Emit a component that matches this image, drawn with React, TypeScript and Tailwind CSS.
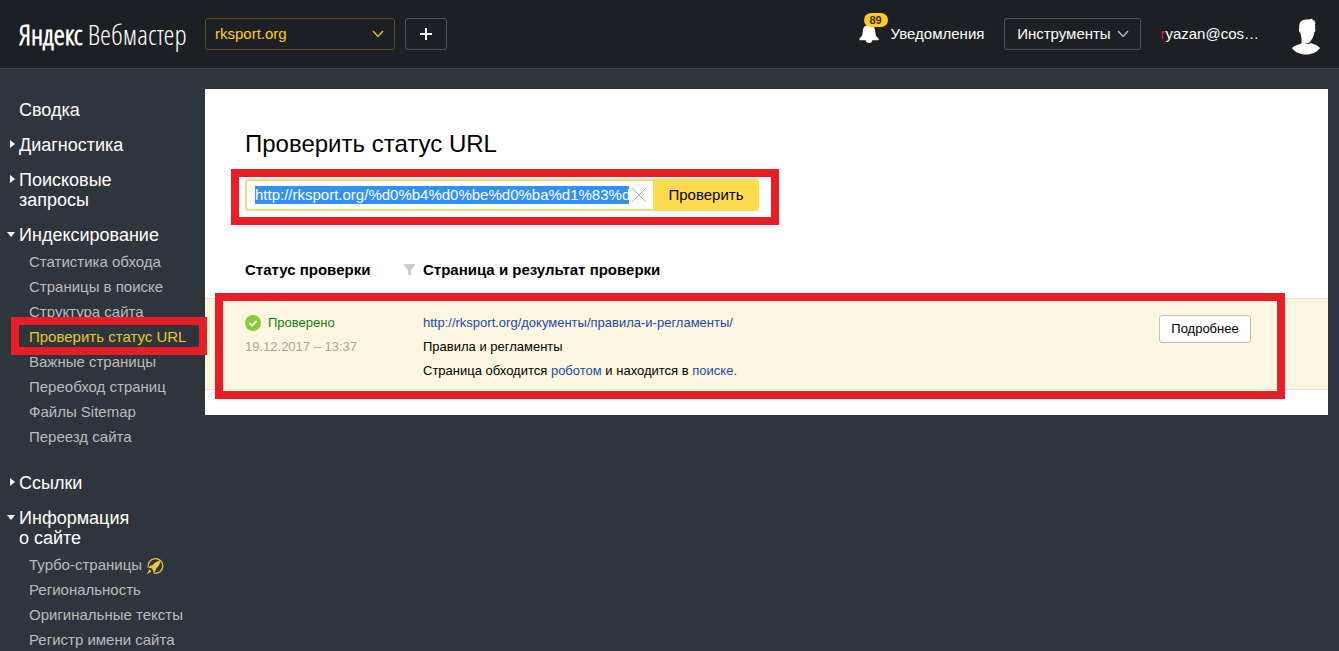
import { useEffect, useRef, useState } from "react";

type NavGroup = {
  title: string;
  state?: "closed" | "open";
  items?: { label: string; active?: boolean; turbo?: boolean }[];
};

const NAV: NavGroup[] = [
  { title: "Сводка" },
  { title: "Диагностика", state: "closed" },
  { title: "Поисковые запросы", state: "closed" },
  {
    title: "Индексирование",
    state: "open",
    items: [
      { label: "Статистика обхода" },
      { label: "Страницы в поиске" },
      { label: "Структура сайта" },
      { label: "Проверить статус URL", active: true },
      { label: "Важные страницы" },
      { label: "Переобход страниц" },
      { label: "Файлы Sitemap" },
      { label: "Переезд сайта" },
    ],
  },
  { title: "Ссылки", state: "closed" },
  {
    title: "Информация о\u00a0сайте",
    state: "open",
    items: [
      { label: "Турбо-страницы", turbo: true },
      { label: "Региональность" },
      { label: "Оригинальные тексты" },
      { label: "Регистр имени сайта" },
    ],
  },
];

const START_URL =
  "http://rksport.org/%d0%b4%d0%be%d0%ba%d1%83%d0%bc%d0%b5%d0%bd%d1%82%d1%8b/";

function Chevron({ className }: { className: string }) {
  return (
    <svg viewBox="0 0 12 8" className={className} fill="none" stroke="currentColor" strokeWidth="1.4" aria-hidden="true">
      <path d="M1 1l5 5.4L11 1" />
    </svg>
  );
}

function BellIcon() {
  return (
    <svg viewBox="0 0 20 20" className="h-5 w-5" fill="#fff" aria-hidden="true">
      <path d="M10 1c3.800 0 6 2.400 6.200 6 .2 3.600.8 5.600 3.400 7.600v1.600H.4v-1.600c2.600-2 3.200-4 3.400-7.600C4 3.400 6.200 1 10 1z" />
      <path d="M6.800 16h6.400a3.200 3 0 0 1-6.400 0z" />
    </svg>
  );
}

function Avatar() {
  return (
    <svg viewBox="0 0 28 38" className="h-[38px] w-7" aria-hidden="true">
      <path
        fill="#fff"
        d="M7.200 9C7.400 5.800 8.600 3.800 11.400 3c2.800-.7 6.200-.1 8.800-1.400l.6 1.900 2.700-.1-1.300 1.600 1.600.9-1 1c.6 1.500.4 3 .2 4.600.8.6.5 3.300-.8 4-.4 3.300-1.200 5.600-2.700 7.200-.9 1.900-2.400 3.500-4.300 3.500-2.500-.3-4.200-1.700-5.200-4.300-.8-1.800-1.400-3.900-1.700-6.100-1.300-.5-1.900-3.300-1.100-4.200z"
      />
      <path
        fill="#fff"
        d="M9.600 19.500l2.600 3.500c.2 1.500.6 2.600 1.400 3.300 1.600 1 3.900.9 5.200-.3 2.800 1.200 7.100 2.100 9.200 5-2.800 4.300-8 6.500-14 6.500S2.800 35.300 0 31c2.600-2.800 6.600-3 9.600-4.700z"
      />
    </svg>
  );
}

function TurboIcon() {
  return (
    <svg viewBox="0 0 18 18" className="h-[18px] w-[18px] text-[#ecc93a]" fill="none" stroke="currentColor" aria-hidden="true">
      <path d="M2.200 10.500A7.400 7.400 0 1 1 8 16.200" strokeWidth="1.300" />
      <path
        d="M14.200 3.800c-3.400.3-5.800 1.900-7.600 4.500l-2.600.4-1.600 2.500 2.700-.2 2.200 2.200-.4 2.700 2.600-1.700.6-2.500c2.500-2 4-4.500 4.100-7.900z"
        fill="currentColor"
        stroke="none"
      />
      <path d="M.8 17.200l2.600-4.600 2 2z" fill="currentColor" stroke="none" />
    </svg>
  );
}

function Header() {
  return (
    <header className="flex h-[69px] items-center border-b border-[#3f444b] bg-[#1c1f23] text-[15px] text-white">
      <a
        href="#"
        className="w-[205px] shrink-0 pl-[19px] text-[28px] leading-8 whitespace-nowrap [font-family:'Open_Sans_Condensed_Light','Open_Sans_Condensed',sans-serif]"
      >
        <span className="font-bold">Яндекс</span> Вебмастер
      </a>

      <div className="relative w-[190px]">
        <select
          aria-label="Сайт"
          className="h-8 w-full appearance-none rounded-[3px] border border-[#5c4f1f] bg-transparent px-[9px] text-[#ffcc22] outline-none"
        >
          <option>rksport.org</option>
        </select>
        <Chevron className="pointer-events-none absolute top-3 right-[11px] h-2 w-3 text-[#e6bd2a]" />
      </div>
      <button
        type="button"
        aria-label="Добавить сайт"
        className="ml-2.5 flex h-8 w-[42px] items-center justify-center rounded-[3px] border border-[#50545a]"
      >
        <svg viewBox="0 0 12 12" className="h-3 w-3" stroke="#fff" strokeWidth="2" aria-hidden="true">
          <path d="M6 0v12M0 6h12" />
        </svg>
      </button>

      <a href="#" className="relative ml-auto flex items-center gap-3">
        <BellIcon />
        <span className="absolute -top-2.5 left-[5px] flex h-3.5 w-6 items-center justify-center rounded-full bg-[#ffcc1a] text-[11px] font-bold text-[#3a2e00]">
          89
        </span>
        <span>Уведомления</span>
      </a>
      <button
        type="button"
        className="ml-5 flex h-8 w-[137px] items-center justify-center gap-1.5 rounded-[3px] border border-[#50545a]"
      >
        Инструменты
        <Chevron className="h-2 w-3 text-[#b9bbbe]" />
      </button>
      <a href="#" className="ml-[19px]">
        <span className="text-[#d5202a]">r</span>yazan@cos…
      </a>
      <a href="#" aria-label="Профиль" className="mr-[19px] ml-[33px] pt-1">
        <Avatar />
      </a>
    </header>
  );
}

function Sidebar() {
  return (
    <nav className="w-[205px] shrink-0 pt-[31px]">
      <ul className="flex flex-col gap-[15px]">
        {NAV.map((group) => (
          <li key={group.title}>
            <a href="#" className="flex text-lg leading-5 text-white">
              <span className="flex h-[18px] w-[19px] shrink-0 items-center justify-end pr-1" aria-hidden="true">
                {group.state === "closed" && (
                  <svg viewBox="0 0 5 8" className="h-2 w-[5px]" fill="#fff">
                    <path d="M0 0l5 4-5 4z" />
                  </svg>
                )}
                {group.state === "open" && (
                  <svg viewBox="0 0 8 5" className="h-[5px] w-2" fill="#fff">
                    <path d="M0 0h8L4 5z" />
                  </svg>
                )}
              </span>
              <span className="max-w-[145px]">{group.title}</span>
            </a>
            {group.items && (
              <ul className="pt-[5px] pb-2">
                {group.items.map((item) => (
                  <li key={item.label} className="relative">
                    <a
                      href="#"
                      className={`flex h-[25px] items-center gap-1 pl-[29px] text-[15px] whitespace-nowrap ${
                        item.active ? "text-[#e8c91f]" : "text-[#b9bcbf]"
                      }`}
                    >
                      {item.label}
                      {item.turbo && <TurboIcon />}
                    </a>
                    {item.active && (
                      <span className="pointer-events-none absolute -top-2 -right-0.5 -bottom-[5px] left-[11px] z-10 border-8 border-[#e91d25]" />
                    )}
                  </li>
                ))}
              </ul>
            )}
          </li>
        ))}
      </ul>
    </nav>
  );
}

function UrlForm() {
  const [url, setUrl] = useState(START_URL);
  const inputRef = useRef<HTMLInputElement>(null);

  useEffect(() => {
    const input = inputRef.current;
    if (!input) return;
    input.focus();
    input.setSelectionRange(0, input.value.length, "backward");
    input.scrollLeft = 0;
  }, []);

  return (
    <form
      className="relative ml-10 flex h-8 w-[514px] text-[15px]"
      onSubmit={(e) => e.preventDefault()}
    >
      <div className="flex min-w-0 flex-1 items-center rounded-l-[3px] border-2 border-r-0 border-[#f2dc82] bg-white pl-2">
        <input
          ref={inputRef}
          type="text"
          aria-label="URL страницы"
          value={url}
          onChange={(e) => setUrl(e.target.value)}
          className="h-[18px] min-w-0 flex-1 leading-[18px] text-black outline-none selection:bg-[#3390f5] selection:text-white"
        />
        <button
          type="button"
          aria-label="Очистить"
          onClick={() => setUrl("")}
          className="flex w-6 shrink-0 items-center justify-center pr-1"
        >
          <svg viewBox="0 0 14 14" className="h-3.5 w-3.5" stroke="#aaa" strokeWidth="1" aria-hidden="true">
            <path d="M0 0l14 14M14 0L0 14" />
          </svg>
        </button>
      </div>
      <button type="submit" className="w-[106px] rounded-r-[3px] bg-[#ffdb4d] text-black">
        Проверить
      </button>
      <span className="pointer-events-none absolute -top-2.5 -right-5 -bottom-3.5 -left-3.5 border-8 border-[#e91d25]" />
    </form>
  );
}

function ResultsTable() {
  return (
    <table className="mt-[43px] w-full text-left text-[13px]">
      <thead>
        <tr className="text-[15px] leading-8 text-black">
          <th className="w-[218px] pl-10 font-bold">
            <span className="flex items-center justify-between pr-2">
              <span>Статус проверки</span>
              <svg viewBox="0 0 11 12" className="h-3 w-[11px]" fill="#ccc" aria-label="Фильтр">
                <path d="M0 0h11v1.500L7 6v6L4 10V6L0 1.500z" />
              </svg>
            </span>
          </th>
          <th colSpan={2} className="font-bold">
            Страница и результат проверки
          </th>
        </tr>
        <tr aria-hidden="true">
          <td colSpan={3} className="h-3" />
        </tr>
      </thead>
      <tbody>
        <tr className="relative border-y border-[#e6e1cf] bg-[#fdf7e1] align-top">
          <td className="pt-3 pb-1.5 pl-10 leading-6">
            <span className="flex items-center gap-[7px] text-[#12800f]">
              <svg viewBox="0 0 16 16" className="h-4 w-4" aria-hidden="true">
                <circle cx="8" cy="8" r="8" fill="#85cb3a" />
                <path d="M4.500 8l2.600 2.600 4.600-4.800" fill="none" stroke="#fff" strokeWidth="1.800" />
              </svg>
              Проверено
            </span>
            <span className="block text-[#aaa89c]">19.12.2017 – 13:37</span>
            <span className="pointer-events-none absolute -top-1.5 right-[43px] -bottom-[11px] left-2.5 border-8 border-[#e91d25]" />
          </td>
          <td className="pt-3 pb-1.5 leading-6 text-black">
            <a href="#" className="block text-[#1a4ba8]">
              http://rksport.org/документы/правила-и-регламенты/
            </a>
            <p>Правила и регламенты</p>
            <p>
              Страница обходится{" "}
              <a href="#" className="text-[#1a4ba8]">
                роботом
              </a>{" "}
              и находится в{" "}
              <a href="#" className="text-[#1a4ba8]">
                поиске.
              </a>
            </p>
          </td>
          <td className="w-[170px] pt-4 pr-[77px] text-right">
            <button
              type="button"
              className="h-7 w-[92px] rounded-[3px] border border-[#c4c0b2] bg-white text-black"
            >
              Подробнее
            </button>
          </td>
        </tr>
      </tbody>
    </table>
  );
}

export default function App() {
  return (
    <div className="h-screen overflow-hidden bg-[#2f353c] [font-family:'Liberation_Sans',Arial,sans-serif]">
      <Header />
      <div className="flex items-start">
        <Sidebar />
        <main className="mt-5 mr-[11px] min-w-0 flex-1 bg-white pt-10 pb-[25px]">
          <h1 className="mb-5 pl-10 text-2xl leading-[30px] text-black">Проверить статус URL</h1>
          <UrlForm />
          <ResultsTable />
        </main>
      </div>
    </div>
  );
}
